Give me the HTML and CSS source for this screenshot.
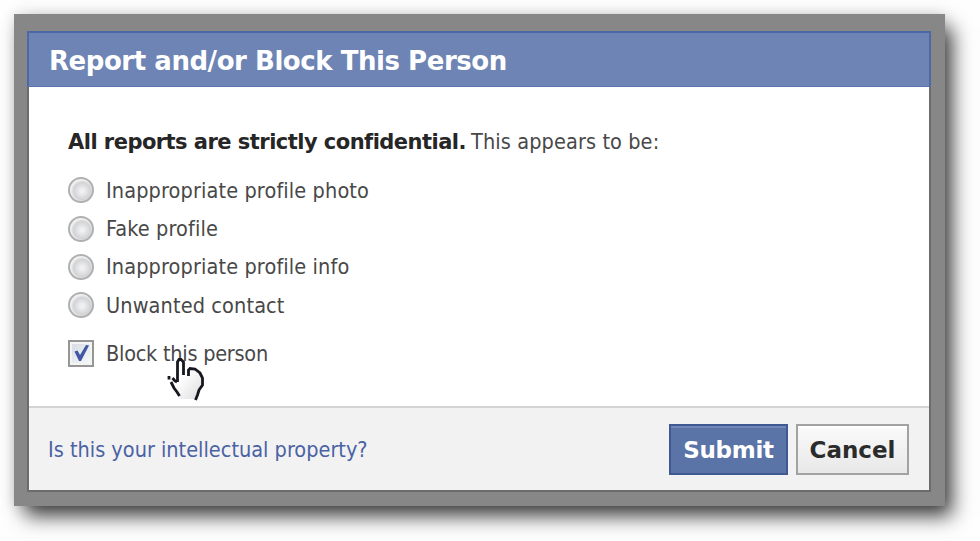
FILE: index.html
```html
<!DOCTYPE html>
<html lang="en">
<head>
    <meta charset="UTF-8">
    <meta name="viewport" content="width=device-width, initial-scale=1.0">
    <title>Report and/or Block This Person</title>
    <link rel="stylesheet" href="styles.css">
</head>
<body>
    <div class="frame">
        <form class="dialog">
            <h1 class="dialog-title">Report and/or Block This Person</h1>

            <div class="dialog-body">
                <p class="intro"><strong>All reports are strictly confidential.</strong> <span class="intro-text">This appears to be:</span></p>

                <label class="option"><input type="radio" name="reason"><span>Inappropriate profile photo</span></label>
                <label class="option"><input type="radio" name="reason"><span>Fake profile</span></label>
                <label class="option"><input type="radio" name="reason"><span>Inappropriate profile info</span></label>
                <label class="option"><input type="radio" name="reason"><span>Unwanted contact</span></label>

                <label class="option block-option">
                    <span class="checkbox">
                        <svg width="22" height="23" viewBox="0 0 22 23">
                            <path d="M4.500 9.500 L7.500 8.500 L10 13 L16 3 L19 3.500 L11 19 L9 19 Z" fill="#3f57a5"/>
                        </svg>
                    </span>
                    <span class="block-text">Block this person</span>
                    <!-- hand pointer -->
                    <svg class="cursor" width="38" height="46" viewBox="0 0 38 46">
                        <defs>
                            <linearGradient id="hand" x1="0" y1="0" x2="1" y2="1">
                                <stop offset="0.4" stop-color="#fff"/>
                                <stop offset="1" stop-color="#ddd"/>
                            </linearGradient>
                        </defs>
                        <path d="M11 5 Q13 2 16 5 V16 L22 12 L28 13 L34 18 L36 25 L32 34 L29 42 H14 L10 34 L3 22 L5 18 L11 22 Z" fill="url(#hand)"/>
                        <path d="M11.500 25 V5 L13 2.500 H15 L17.500 5 V18 M11 25 L9 24 L6.500 21 M3 19 V22.500 M5 25 L8 31 L11 35 L13.500 39 M22.500 19 V13 L24 11.500 L29 12 L34 16 L36.500 21 V28 L33 33 L31.500 38 L29.500 43" fill="none" stroke="#17171f" stroke-width="2.8"/>
                    </svg>
                </label>
            </div>

            <div class="dialog-footer">
                <a class="property-link" href="#">Is this your intellectual property?</a>
                <button type="button" class="btn submit">Submit</button>
                <button type="button" class="btn cancel">Cancel</button>
            </div>
        </form>
    </div>
</body>
</html>
```
FILE: styles.css
```css
* {
    box-sizing: border-box;
}
body {
    margin: 0;
    padding: 14px;
    min-height: 100vh;
    background: #fefefe;
    color: #484848;
    font-family: "DejaVu Sans Condensed", "DejaVu Sans", sans-serif;
    font-stretch: condensed;
    font-size: 21.5px;
    overflow: hidden;
}
.frame {
    width: 931px;
    height: 492px;
    padding: 17px 14px 14px 13px;
    background: #878787;
    box-shadow: 9px 12px 19px -2px rgba(0, 0, 0, 0.75), 0 0 14px rgba(0, 0, 0, 0.15);
}
.dialog {
    display: flex;
    flex-direction: column;
    height: 461px;
    background: #fff;
    border: 2px solid #6c6c6c;
    border-top: none;
}
.dialog-title {
    flex: none;
    height: 56px;
    margin: 0 -2px;
    padding-left: 20px;
    border: 2px solid #4d68a6;
    border-bottom: 1px solid #5a74ae;
    background: #6d84b4;
    color: #fff;
    font-family: "DejaVu Sans", sans-serif;
    font-stretch: normal;
    font-size: 26px;
    line-height: 56px;
    letter-spacing: -0.45px;
}
.dialog-body {
    flex: 1;
    padding: 40px 39px 0;
}
.intro {
    margin: 0 0 14px;
    line-height: 30px;
    white-space: nowrap;
}
.intro strong {
    color: #262626;
    font-family: "DejaVu Sans", sans-serif;
    font-stretch: normal;
    font-size: 21px;
    letter-spacing: -0.53px;
}
.intro-text {
    margin-left: -1px;
    letter-spacing: 0.1px;
}
.option {
    display: flex;
    align-items: center;
    height: 38.4px;
    gap: 12px;
    letter-spacing: 0.12px;
}
.option input {
    appearance: none;
    width: 26px;
    height: 26px;
    margin: 0;
    border: 2px solid #b0b0b0;
    border-radius: 50%;
    background: radial-gradient(circle at 55% 55%, #f0f0f1 10%, #d2d3d6 50%, #f2f2f2 66%);
}
.block-option {
    position: relative;
    margin-top: 10px;
}
.block-text {
    letter-spacing: -0.25px;
}
.checkbox {
    display: flex;
    align-items: center;
    justify-content: center;
    width: 26px;
    height: 27px;
    border: 2px solid #969696;
    background: linear-gradient(135deg, #d5dae2, #fafafa);
    box-shadow: inset 0 0 0 2px #f4f4f4;
}
.cursor {
    position: absolute;
    left: 98px;
    top: 22px;
}
.dialog-footer {
    display: flex;
    align-items: center;
    height: 84px;
    padding: 1px 20px 0 19px;
    gap: 8px;
    background: #f2f2f2;
    border-top: 2px solid #d4d4d4;
}
.property-link {
    margin-right: auto;
    color: #4a62a4;
    text-decoration: none;
}
.btn {
    height: 51px;
    padding: 0;
    font-family: "DejaVu Sans", sans-serif;
    font-size: 23px;
    font-weight: bold;
}
.submit {
    width: 119px;
    background: #5b74a8;
    border: 2px solid #3f5a92;
    box-shadow: inset 0 2px 0 #7388b8;
    color: #fff;
    letter-spacing: -0.3px;
}
.cancel {
    width: 113px;
    background: linear-gradient(#fafafa, #e8e8e8);
    border: 2px solid #a2a2a2;
    box-shadow: inset 0 2px 0 #fff;
    color: #2b2b2b;
}
```
